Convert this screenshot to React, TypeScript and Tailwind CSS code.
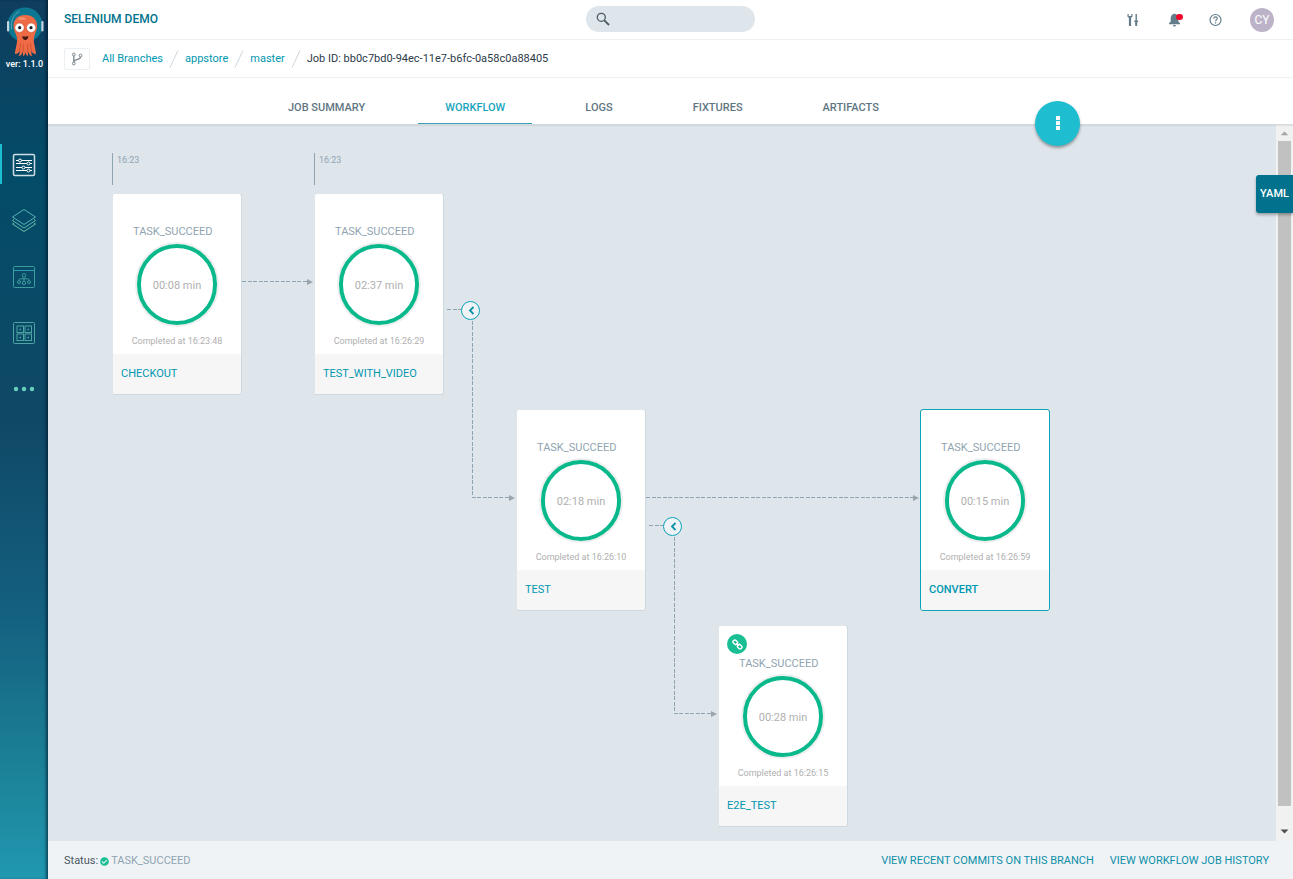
import type { ReactNode } from 'react';
import { FaCheckCircle } from 'react-icons/fa';

type Task = {
  name: string;
  time: string;
  completed: string;
  place: string;
  linked?: boolean;
  selected?: boolean;
};

const tasks: Task[] = [
  { name: 'CHECKOUT', time: '00:08 min', completed: '16:23:48', place: 'left-[64px] top-[68px]' },
  { name: 'TEST_WITH_VIDEO', time: '02:37 min', completed: '16:26:29', place: 'left-[266px] top-[68px]' },
  { name: 'TEST', time: '02:18 min', completed: '16:26:10', place: 'left-[468px] top-[284px]' },
  { name: 'CONVERT', time: '00:15 min', completed: '16:26:59', place: 'left-[872px] top-[284px]', selected: true },
  { name: 'E2E_TEST', time: '00:28 min', completed: '16:26:15', place: 'left-[670px] top-[500px]', linked: true },
];

const tabs = ['JOB SUMMARY', 'WORKFLOW', 'LOGS', 'FIXTURES', 'ARTIFACTS'];

function Logo() {
  return (
    <svg viewBox="0 0 40 50" className="h-[50px] w-10" aria-hidden="true">
      <circle cx="20" cy="18" r="17.500" fill="#0d7791" />
      <path d="M6.500 22C5.500 14 8 8 14 4.500" fill="none" stroke="#5aa6b8" strokeWidth="1" strokeLinecap="round" />
      <rect x="2" y="14" width="2.200" height="10.500" rx="1" fill="#c3d5e0" />
      <rect x="36.300" y="14" width="2.200" height="10.500" rx="1" fill="#c3d5e0" />
      <path
        d="M20.300 8C13 8 8.500 12.500 8.500 19c0 4.500 2.300 7 3.200 10.500.8 3 .3 6-.2 8.500-.5 3-1.500 5.500-1.500 9 2 .3 3.500-1 4.500-3 .2 1.800 0 3.500-.8 5 2.200 0 3.300-2 3.800-4.300.6 1.500.7 3 .4 4.500 1.600-.5 2.300-2.200 2.500-4.200.4 2 1 3.700 2.600 4.200-.3-1.500-.2-3 .4-4.500.5 2.300 1.600 4.300 3.800 4.300-.8-1.500-1-3.200-.8-5 1 2 2.500 3.300 4.500 3 0-3.500-1-6-1.500-9-.5-2.500-1-5.500-.2-8.500.9-3.500 2.900-6 2.900-10.500C32.100 12.500 27.600 8 20.300 8z"
        fill="#ee6b46"
      />
      <path d="M15.500 36c0 3-.5 5-1.300 8M18.500 37l-.5 8M22.500 37l.5 8M25.500 36c0 3 .5 5 1.300 8" stroke="#c94f30" strokeWidth=".8" fill="none" />
      <ellipse cx="17" cy="11.500" rx="4" ry="1.600" fill="#f58d68" />
      <circle cx="14.500" cy="20.700" r="4.700" fill="#fff" stroke="#c94f30" strokeWidth=".6" />
      <circle cx="26.200" cy="20.700" r="4.700" fill="#fff" stroke="#c94f30" strokeWidth=".6" />
      <circle cx="14.700" cy="20.700" r="1.600" fill="#16222c" />
      <circle cx="26" cy="20.700" r="1.600" fill="#16222c" />
      <path d="M17.300 29c2 .8 4 .8 6 0 .2 2.300-1.100 4-3 4s-3.200-1.700-3-4z" fill="#431b14" />
    </svg>
  );
}

function NavLink({ label, active, children }: { label: string; active?: boolean; children: ReactNode }) {
  return (
    <a
      href="#"
      aria-label={label}
      className={`flex h-10 items-center justify-center border-l-2 pt-px pr-0.5 ${active ? 'border-[#1fbdd0]' : 'border-transparent'}`}
    >
      {children}
    </a>
  );
}

function Sidebar() {
  return (
    <aside className="flex w-12 shrink-0 flex-col bg-[linear-gradient(to_bottom,#0f3d5e_0%,#034c68_20%,#0f4866_48%,#146080_70%,#1b7f95_86%,#2098b0_100%)] shadow-[inset_-3px_0_3px_-1px_rgba(0,20,40,0.6)]">
      <div className="flex flex-col items-center pt-[7px] pl-px">
        <Logo />
        <span className="mt-px text-[9px] leading-3 font-medium whitespace-nowrap text-white">ver: 1.1.0</span>
      </div>
      <nav aria-label="Main" className="mt-[74px] flex flex-col gap-4">
        <NavLink label="Timeline" active>
          <svg viewBox="0 0 24 24" className="size-6" fill="none" stroke="#fff">
            <rect x="1.500" y="1.500" width="21" height="21" rx="1.500" strokeWidth="1.500" stroke="#cfdde4" />
            <path d="M4 7.500h2.500M9.500 7.500H20M4 10.500h11M18 10.500h2M4 14.500h6M13 14.500h7M4 17.500h11M18 17.500h2" strokeWidth="1.200" />
            <circle cx="8" cy="7.500" r="1.500" />
            <circle cx="16.500" cy="10.500" r="1.500" />
            <circle cx="11.500" cy="14.500" r="1.500" />
            <circle cx="16.500" cy="17.500" r="1.500" />
          </svg>
        </NavLink>
        <NavLink label="Catalog">
          <svg viewBox="0 0 26 26" className="size-[26px]" fill="none" stroke="#54b3b3" strokeLinejoin="round">
            <path d="M13 1.500L24.500 9 13 16.500 1.500 9z" />
            <path d="M3 11.500L1.500 12.500 13 20l11.500-7.500-1.500-1" stroke="#5db9ae" />
            <path d="M3 15L1.500 16 13 23.500 24.500 16 23 15" stroke="#6bbfa6" />
          </svg>
        </NavLink>
        <NavLink label="Applications">
          <svg viewBox="0 0 24 24" className="size-6" fill="none" stroke="#3f9c9c">
            <rect x="1.500" y="1.500" width="21" height="21" rx="1" />
            <path d="M1.500 5.500h21" stroke="#2f9aab" />
            <circle cx="12" cy="10.500" r="1.800" />
            <circle cx="7" cy="17" r="1.500" />
            <circle cx="12" cy="18" r="1.700" />
            <circle cx="17" cy="17" r="1.500" />
            <path d="M12 12.300v4M7 15.500c0-1.200.5-1.700 1.500-1.700h7c1 0 1.500.5 1.500 1.700" />
          </svg>
        </NavLink>
        <NavLink label="Dashboards">
          <svg viewBox="0 0 24 24" className="size-6" fill="none" stroke="#4ba5a0">
            <rect x="1.500" y="1.500" width="21" height="21" rx="1" />
            <rect x="5" y="5" width="6.500" height="6.500" />
            <rect x="13" y="5" width="6.500" height="6.500" />
            <rect x="5" y="13" width="6.500" height="6.500" />
            <rect x="13" y="13" width="6.500" height="6.500" />
            <path d="M7.500 8.500h1.500M15.500 8.500h1.500M7.500 16.500h1.500M15.500 16.500h1.500" strokeWidth="1.500" />
          </svg>
        </NavLink>
        <NavLink label="More">
          <svg viewBox="0 0 24 24" className="size-6" fill="#6ad0bd">
            <circle cx="4" cy="12" r="2.200" />
            <circle cx="12" cy="12" r="2.200" />
            <circle cx="20" cy="12" r="2.200" />
          </svg>
        </NavLink>
      </nav>
    </aside>
  );
}

function Header() {
  return (
    <header className="grid h-10 shrink-0 grid-cols-[1fr_auto_1fr] items-center border-b border-[#f0f0f0] px-4 pb-px">
      <h1 className="text-xs font-medium text-[#00728e]">SELENIUM DEMO</h1>
      <label className="flex h-[26px] w-[169px] items-center rounded-full bg-[#dee5eb] pl-2.5">
        <svg viewBox="0 0 14 14" className="size-3.5 shrink-0" fill="none" stroke="#4c5a63" aria-hidden="true">
          <circle cx="5.300" cy="5.300" r="4" strokeWidth="1.300" />
          <path d="M8.300 8.300l4.700 4.700" strokeWidth="1.800" />
        </svg>
        <input type="search" aria-label="Search" className="min-w-0 flex-1 bg-transparent px-2 text-xs outline-none" />
      </label>
      <div className="flex items-center justify-end pt-px pr-[3px] text-[#647d8a]">
        <button type="button" aria-label="Settings" className="mr-7">
          <svg viewBox="0 0 14 14" className="size-3.5" fill="currentColor">
            <path d="M1.500 1v2.700l1.400 1.100V13h2.200V4.800l1.400-1.100V1H5.300v2H2.700V1z" />
            <path d="M9.500 1h1.400v6.500H9.500zM8.300 7.500h3.800v1.400h-.8l-.2 4.100H9.300l-.2-4.100h-.8z" />
          </svg>
        </button>
        <button type="button" aria-label="Notifications" className="relative mr-[27px]">
          <svg viewBox="0 0 14 14" className="size-3.5" fill="currentColor">
            <path d="M6 .8c-2.300.6-3.300 2.400-3.300 4.700v3L1 10.300v.9h11v-.9L10.300 8.500v-3C10.300 3.200 9.300 1.400 7 .8zM5 12h3c0 .9-.6 1.500-1.500 1.500S5 12.900 5 12z" />
          </svg>
          <span className="absolute top-px left-2 h-1.5 w-[7px] rounded-full bg-[#ee0a28]" />
        </button>
        <button type="button" aria-label="Help" className="mr-[27px]">
          <svg viewBox="0 0 14 14" className="size-3.5" fill="none" stroke="currentColor">
            <circle cx="6.500" cy="7" r="5.500" strokeWidth="1.200" />
            <path d="M4.700 5.700c0-1.100.8-1.800 1.800-1.800s1.800.7 1.800 1.600c0 1.200-1.800 1.300-1.800 2.700M6.500 9.300v1.200" strokeWidth="1.100" />
          </svg>
        </button>
        <button type="button" className="size-6 rounded-full bg-[#bdb3c9] text-xs text-white">
          CY
        </button>
      </div>
    </header>
  );
}

function Slash() {
  return (
    <svg viewBox="0 0 10 18" className="mx-1.5 h-[18px] w-2.5" fill="none" stroke="#ccd6dd" aria-hidden="true">
      <path d="M9 .5L1 17.500" />
    </svg>
  );
}

function Breadcrumb() {
  return (
    <nav
      aria-label="Breadcrumb"
      className="flex h-[38px] shrink-0 items-center border-b border-[#f0f0f0] pt-px pl-4 text-[11px] text-[#0097b1]"
    >
      <button
        type="button"
        aria-label="Switch branch"
        className="mr-3 flex h-[22px] w-[26px] items-center justify-center rounded-xs border border-[#eaf0f3]"
      >
        <svg viewBox="0 0 12 14" className="h-3.5 w-3" fill="none" stroke="#7a848b">
          <circle cx="2.800" cy="2.500" r="1.400" />
          <circle cx="2.800" cy="11.500" r="1.400" />
          <circle cx="9.500" cy="3.500" r="1.400" />
          <path d="M2.800 4v6M9.500 5c0 3-5.500 1.500-6.500 4.500" strokeWidth="1.300" />
        </svg>
      </button>
      <a href="#">All Branches</a>
      <Slash />
      <a href="#">appstore</a>
      <Slash />
      <a href="#">master</a>
      <Slash />
      <span className="text-[#2c3a48]">Job ID: bb0c7bd0-94ec-11e7-b6fc-0a58c0a88405</span>
    </nav>
  );
}

function TabBar() {
  return (
    <div className="relative z-10 h-[47px] shrink-0 border-b border-[#d3dbe1] bg-white shadow-[0_1px_1px_rgba(0,0,0,0.06)]">
      <div className="mx-auto flex h-full w-full max-w-[819px] justify-between">
        <nav aria-label="Job" className="flex gap-[26px] pt-4">
          {tabs.map((tab) => (
            <a
              key={tab}
              href="#"
              aria-current={tab === 'WORKFLOW' ? 'page' : undefined}
              className={`flex items-center border-b px-[27px] text-[11px] font-medium ${
                tab === 'WORKFLOW' ? 'border-[#3b9cb5] text-[#18a5bd]' : 'border-transparent text-[#5f7682]'
              }`}
            >
              {tab}
            </a>
          ))}
        </nav>
        <button
          type="button"
          aria-label="Actions"
          className="mt-[23px] flex size-[45px] shrink-0 items-center justify-center rounded-full bg-[#1fbdd0] pb-0.5 shadow-[0_2px_3px_rgba(0,0,0,0.35)]"
        >
          <svg viewBox="0 0 4 14" className="h-3.5 w-1" fill="#fff" aria-hidden="true">
            <path d="M0 0h4v4H0zM0 5h4v4H0zM0 10h4v4H0z" />
          </svg>
        </button>
      </div>
    </div>
  );
}

function ChainIcon() {
  return (
    <svg viewBox="0 0 12 12" className="size-[11px]" fill="none" stroke="#fff" strokeWidth="1.500" aria-hidden="true">
      <g transform="rotate(45 6 6)">
        <rect x="0" y="4" width="5.200" height="4" rx="1.800" />
        <rect x="6.800" y="4" width="5.200" height="4" rx="1.800" />
        <path d="M4 6h4" />
      </g>
    </svg>
  );
}

function TaskCard({ task }: { task: Task }) {
  return (
    <article
      className={`absolute w-[130px] overflow-hidden rounded-[3px] border bg-white bg-clip-padding ${
        task.selected ? 'border-[#0aa3b8]' : 'border-transparent border-r-[#cdd8df] border-b-[#cdd8df]'
      } ${task.place}`}
    >
      <div className="flex h-40 flex-col items-center pt-[30px]">
        <p className="self-start pl-5 text-[11px] leading-4 text-[#8fa4b1]">TASK_SUCCEED</p>
        <div className="mt-1 flex h-[81px] w-20 items-center justify-center rounded-full border-4 border-[#09b98b] pt-[3px] text-[11px] text-[#afafaf] shadow-[0_0_0_2px_#eeeeee]">
          {task.time}
        </div>
        <p className="mt-2 text-[9px] leading-4 text-[#afafaf]">Completed at {task.completed}</p>
      </div>
      <a
        href="#"
        className={`flex h-10 items-center bg-[#f6f6f6] px-2 text-[11px] text-[#0097b1] ${task.selected ? 'font-medium' : ''}`}
      >
        {task.name}
      </a>
      {task.linked && (
        <span className="absolute top-2 left-2 flex size-5 items-center justify-center rounded-full bg-[#18be94]">
          <ChainIcon />
        </span>
      )}
    </article>
  );
}

function Connectors() {
  return (
    <svg className="absolute top-0 left-0 h-full w-full" fill="none" aria-hidden="true">
      <g stroke="#8fa4b1" strokeDasharray="4 1.500" shapeRendering="crispEdges">
        <path d="M194 156.500h66" />
        <path d="M399 184.500h20" />
        <path d="M424.500 190v182.500H462" />
        <path d="M598 372.500h267" />
        <path d="M601 400.500h20" />
        <path d="M626.500 406v182.500H664" />
      </g>
      <path
        d="M259 154l6 3-6 3zM461 370l6 3-6 3zM865 370l6 3-6 3zM663 586l6 3-6 3z"
        fill="#9aa5ab"
      />
    </svg>
  );
}

function Collapse({ place }: { place: string }) {
  return (
    <button
      type="button"
      aria-label="Collapse branch"
      className={`absolute flex size-[19px] items-center justify-center rounded-full border border-[#0aa3b8] bg-[#eff3f6] pl-0.5 ${place}`}
    >
      <svg viewBox="0 0 7 9" className="h-[9px] w-[7px]" fill="none" stroke="#0a93a8" strokeWidth="1.800" aria-hidden="true">
        <path d="M5.500 1L2 4.500 5.500 8" />
      </svg>
    </button>
  );
}

function Canvas() {
  return (
    <div className="relative flex min-h-0 flex-1">
      <section aria-label="Workflow" className="relative min-w-0 flex-1 overflow-hidden bg-[#dee5eb]">
        <Connectors />
        <span className="absolute top-7 left-[64px] h-8 border-l border-[#8fa4b1] pl-1 text-[9px] leading-[14px] text-[#8fa4b1]">
          16:23
        </span>
        <span className="absolute top-7 left-[266px] h-8 border-l border-[#8fa4b1] pl-1 text-[9px] leading-[14px] text-[#8fa4b1]">
          16:23
        </span>
        {tasks.map((task) => (
          <TaskCard key={task.name} task={task} />
        ))}
        <Collapse place="left-[413px] top-[176px]" />
        <Collapse place="left-[615px] top-[392px]" />
      </section>
      <div aria-hidden="true" className="flex w-[17px] shrink-0 flex-col items-center bg-[#f1f1f1]">
        <svg viewBox="0 0 17 17" className="h-4 w-[17px] shrink-0" fill="#a3a3a3">
          <path d="M4.500 11L8.500 7l4 4z" />
        </svg>
        <div className="mb-[18px] w-[13px] flex-1 bg-[#c1c1c1]" />
        <svg viewBox="0 0 17 17" className="h-[17px] w-[17px] shrink-0" fill="#505050">
          <path d="M4.500 5.500l4 4 4-4z" />
        </svg>
      </div>
      <button
        type="button"
        className="absolute top-[50px] right-0 h-[38px] w-[37px] rounded-l-[3px] bg-[#00728e] text-[11px] font-medium text-white shadow-[0_2px_3px_rgba(0,0,0,0.3)]"
      >
        YAML
      </button>
    </div>
  );
}

function Footer() {
  return (
    <footer className="flex h-[38px] shrink-0 items-center justify-between bg-[#eff3f6] pt-0.5 pr-6 pl-4 text-[11px]">
      <p className="flex items-center gap-0.5 text-[#495763]">
        Status:
        <FaCheckCircle className="size-[9px] text-[#18be94]" />
        <span className="text-[#8fa4b1]">TASK_SUCCEED</span>
      </p>
      <div className="flex gap-4 text-[#0d8fa8]">
        <a href="#">VIEW RECENT COMMITS ON THIS BRANCH</a>
        <a href="#">VIEW WORKFLOW JOB HISTORY</a>
      </div>
    </footer>
  );
}

export default function App() {
  return (
    <div className="flex h-screen bg-white font-['Roboto',sans-serif]">
      <Sidebar />
      <main className="flex min-w-0 flex-1 flex-col">
        <Header />
        <Breadcrumb />
        <TabBar />
        <Canvas />
        <Footer />
      </main>
    </div>
  );
}
